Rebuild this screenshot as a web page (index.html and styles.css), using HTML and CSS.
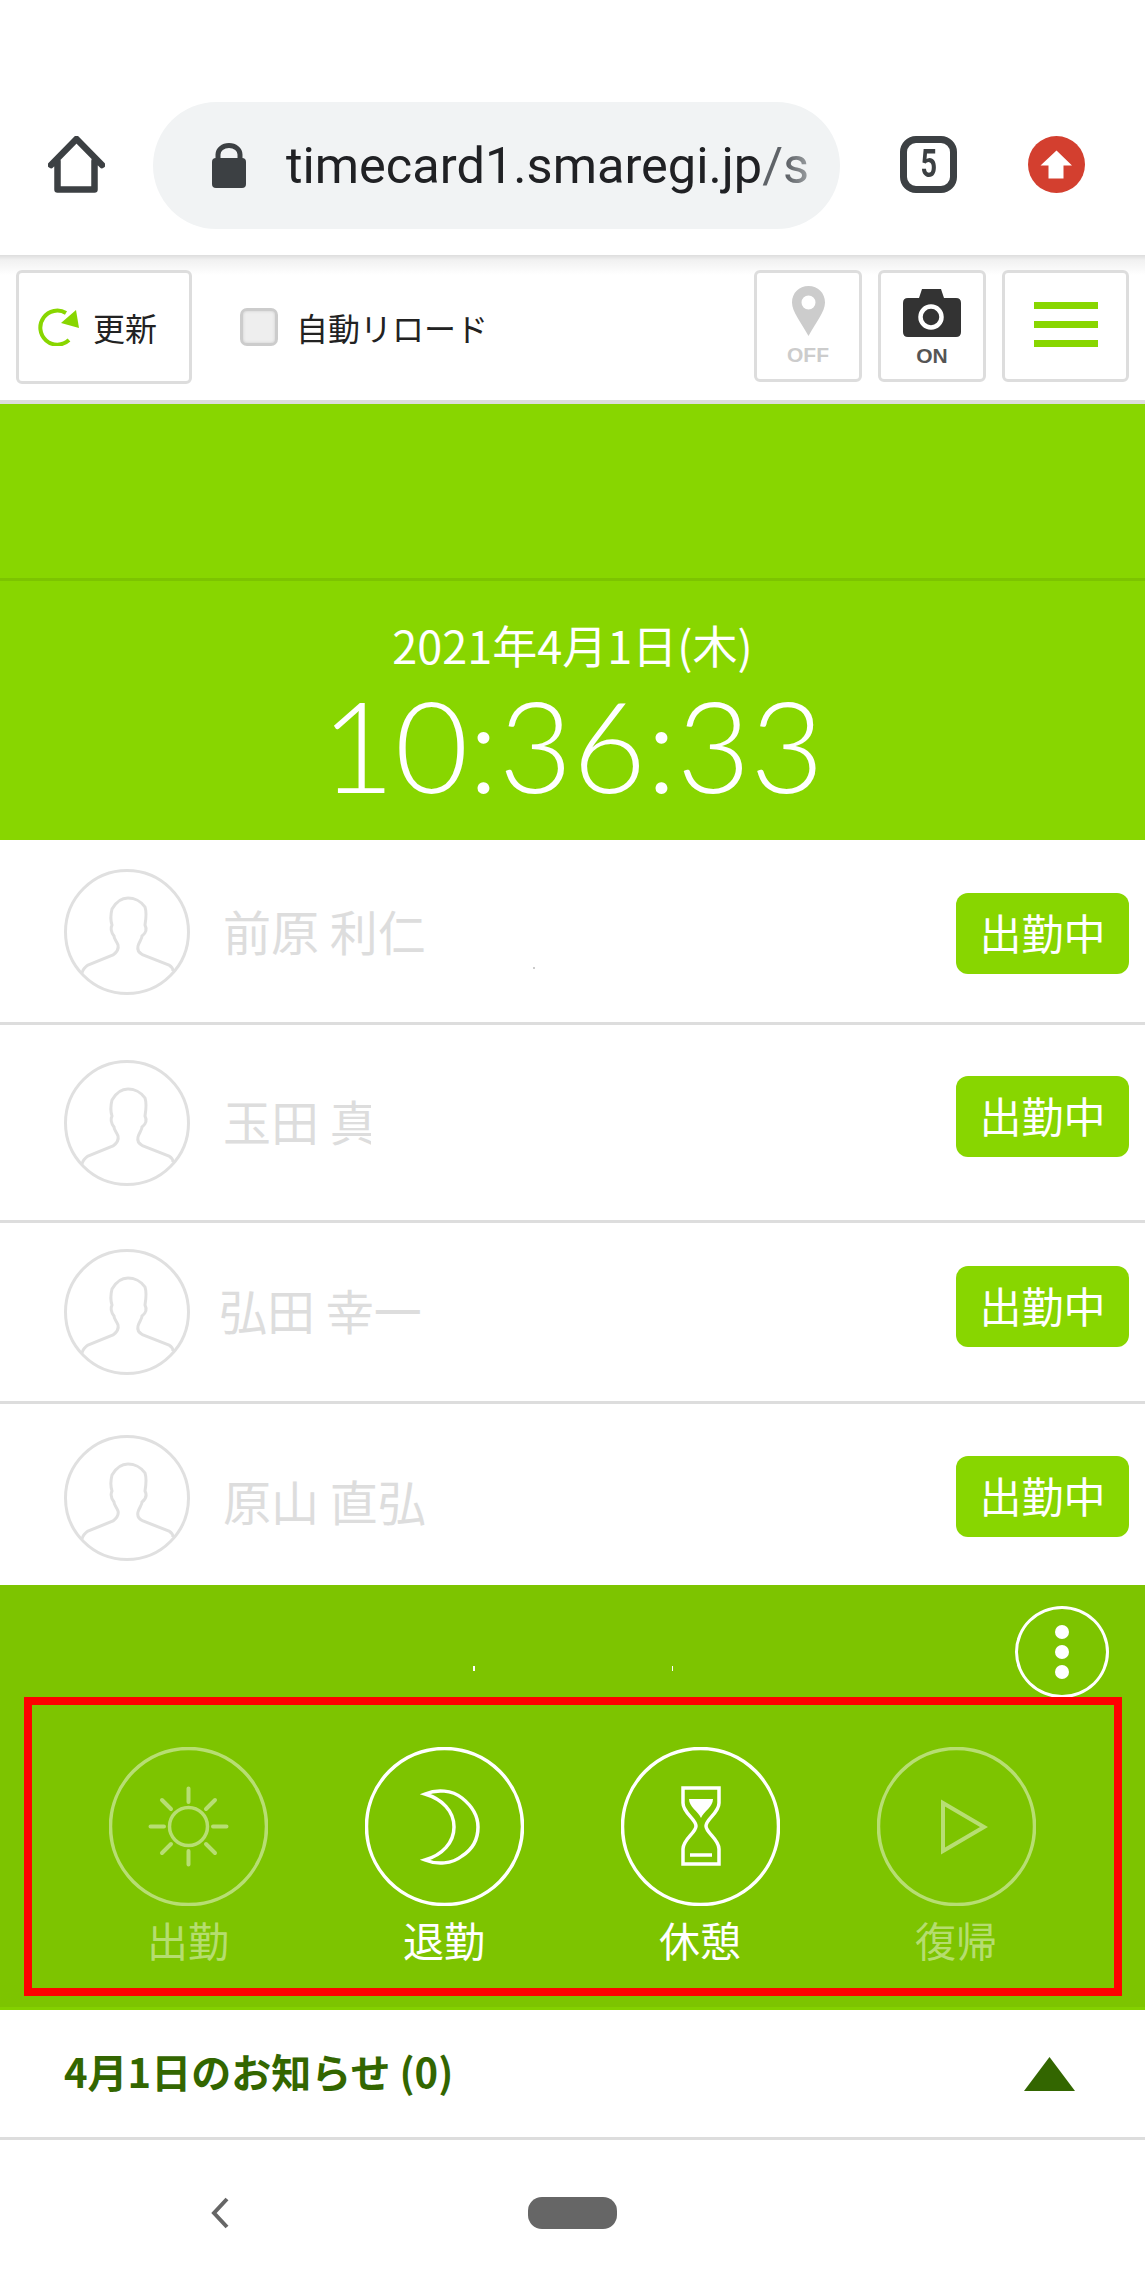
FILE: index.html
```html
<!DOCTYPE html>
<html lang="ja">
<head>
    <meta charset="UTF-8">
    <title>タイムカード</title>
    <link rel="stylesheet" href="styles.css">
</head>
<body>
    <div class="browser-bar">
        <svg class="home-icon" viewBox="0 0 57 57"><path d="M3 29 28.5 3 54 29M9.5 25V53.5H46.5V25" fill="none" stroke="#3c4043" stroke-width="6.5" stroke-linecap="round" stroke-linejoin="round"/></svg>
        <div class="url-pill">
            <svg class="lock-icon" viewBox="0 0 34 45"><rect y="15" width="34" height="30" rx="4" fill="#3c4043"/><path d="M6 17V11.5A11 9 0 0 1 28 11.5V17" fill="none" stroke="#3c4043" stroke-width="5"/></svg>
            <span class="url-text">timecard1.smaregi.jp<span class="url-path">/s</span></span>
        </div>
        <div class="tab-count"><span>5</span></div>
        <svg class="update-icon" viewBox="0 0 57 57"><circle cx="28.5" cy="28.5" r="28.5" fill="#d33f2f"/><path d="M28.5 14.5 44 29.5H35.5V42.5H20.5V29.5H12.5Z" fill="#fff"/></svg>
    </div>

    <div class="toolbar">
        <button class="tool-btn reload-btn">
            <svg class="reload-icon" viewBox="0 0 42 38"><path d="M28 5A17 17 0 1 0 31 32" fill="none" stroke="#88d600" stroke-width="4"/><path d="M38 2 41 20 23 15Z" fill="#88d600"/></svg>
            <span>更新</span>
        </button>
        <label class="auto-reload"><span class="check-box"></span>自動リロード</label>
        <button class="tool-btn status-btn gps-btn">
            <svg class="pin-icon" viewBox="0 0 33 50"><path fill-rule="evenodd" d="M16.5 0C26 0 33 7 33 16.5 33 26 24 36 16.5 50 9 36 0 26 0 16.5 0 7 7 0 16.5 0ZM16.5 9.500A7 7 0 1 0 16.500 23.500 7 7 0 1 0 16.500 9.500Z" fill="#ccc"/></svg>
            <span class="status-text">OFF</span>
        </button>
        <button class="tool-btn status-btn camera-btn">
            <svg class="camera-icon" viewBox="0 0 58 48"><path d="M19 0H38L41 9H53Q58 9 58 14V43Q58 48 53 48H5Q0 48 0 43V14Q0 9 5 9H16Z" fill="#333"/><circle cx="28" cy="28" r="10.500" fill="none" stroke="#fff" stroke-width="4.500"/></svg>
            <span class="status-text">ON</span>
        </button>
        <button class="tool-btn menu-btn"><i></i><i></i><i></i></button>
    </div>

    <div class="title-band"></div>
    <div class="clock-band">
        <div class="date">2021年4月1日(木)</div>
        <div class="clock">10:36:33</div>
    </div>

    <ul class="staff-list">
        <li class="staff row-a">
            <svg class="avatar" viewBox="0 0 126 126"><circle cx="63" cy="63" r="61.500"/><path d="M18 104C19 100 21 98 24 96L49 86C53 83 55 80 54 76 52 71 50 70 50 67 47 63 46 60 48 56 46 50 47 44 48 40 52 33 58 29 64 29 70 29 77 32 81 38 83 44 82 50 81 56 83 60 82 64 78 67 78 70 75 73 74 77 73 81 75 84 79 86L105 96C108 98 109 100 109 102"/></svg>
            <span class="staff-name">前原 利仁</span>
            <span class="badge">出勤中</span>
        </li>
        <li class="staff row-b">
            <svg class="avatar" viewBox="0 0 126 126"><circle cx="63" cy="63" r="61.500"/><path d="M18 104C19 100 21 98 24 96L49 86C53 83 55 80 54 76 52 71 50 70 50 67 47 63 46 60 48 56 46 50 47 44 48 40 52 33 58 29 64 29 70 29 77 32 81 38 83 44 82 50 81 56 83 60 82 64 78 67 78 70 75 73 74 77 73 81 75 84 79 86L105 96C108 98 109 100 109 102"/></svg>
            <span class="staff-name clip-name">玉田 真</span>
            <span class="badge">出勤中</span>
        </li>
        <li class="staff row-c">
            <svg class="avatar" viewBox="0 0 126 126"><circle cx="63" cy="63" r="61.500"/><path d="M18 104C19 100 21 98 24 96L49 86C53 83 55 80 54 76 52 71 50 70 50 67 47 63 46 60 48 56 46 50 47 44 48 40 52 33 58 29 64 29 70 29 77 32 81 38 83 44 82 50 81 56 83 60 82 64 78 67 78 70 75 73 74 77 73 81 75 84 79 86L105 96C108 98 109 100 109 102"/></svg>
            <span class="staff-name">弘田 幸一</span>
            <span class="badge">出勤中</span>
        </li>
        <li class="staff row-d">
            <svg class="avatar" viewBox="0 0 126 126"><circle cx="63" cy="63" r="61.500"/><path d="M18 104C19 100 21 98 24 96L49 86C53 83 55 80 54 76 52 71 50 70 50 67 47 63 46 60 48 56 46 50 47 44 48 40 52 33 58 29 64 29 70 29 77 32 81 38 83 44 82 50 81 56 83 60 82 64 78 67 78 70 75 73 74 77 73 81 75 84 79 86L105 96C108 98 109 100 109 102"/></svg>
            <span class="staff-name">原山 直弘</span>
            <span class="badge">出勤中</span>
        </li>
    </ul>
    <i class="speck speck-row"></i>

    <div class="punch-panel">
        <button class="more-btn"><i></i><i></i><i></i></button>
        <div class="punch-frame">
            <div class="punch-item off">
                <svg class="punch-icon" viewBox="0 0 159 159"><circle cx="79.500" cy="79.500" r="78"/><circle cx="79.500" cy="79.500" r="19"/><path stroke-width="4" stroke-linecap="round" d="M79.500 41.500V55M79.500 104V117.500M41.500 79.500H55M104 79.500H117.500M53 53 62 62M97 97 106 106M53 106 62 97M97 62 106 53"/></svg>
                <span class="punch-label">出勤</span>
            </div>
            <div class="punch-item">
                <svg class="punch-icon" viewBox="0 0 159 159"><circle cx="79.500" cy="79.500" r="78"/><path d="M60 47C72 42 87 43 97 51 107 59 113 69 113 80 113 91 108 102 97 109 87 117 72 118 60 113 77 108 89 96 89 80 89 64 77 52 60 47Z"/></svg>
                <span class="punch-label">退勤</span>
            </div>
            <div class="punch-item">
                <svg class="punch-icon" viewBox="0 0 159 159"><circle cx="79.500" cy="79.500" r="78"/><path d="M62 41H98V56C98 66 85 72 85 79 85 86 98 92 98 102V117H62V102C62 92 75 86 75 79 75 72 62 66 62 56Z"/><path class="fill" d="M68 52H92C92 60 83 64 80 71 77 64 68 60 68 52Z"/><path d="M69 108H91"/></svg>
                <span class="punch-label">休憩</span>
            </div>
            <div class="punch-item off">
                <svg class="punch-icon" viewBox="0 0 159 159"><circle cx="79.500" cy="79.500" r="78"/><path stroke-width="4" d="M66 56 107 80 66 104Z"/></svg>
                <span class="punch-label">復帰</span>
            </div>
        </div>
        <i class="speck speck-a"></i>
        <i class="speck speck-b"></i>
    </div>

    <div class="notice-bar">
        <span class="notice-title">4月1日のお知らせ (0)</span>
        <svg class="notice-arrow" viewBox="0 0 51 34"><path d="M25.500 0 51 34H0Z" fill="#336600"/></svg>
    </div>

    <div class="nav-bar">
        <svg class="nav-back" viewBox="0 0 19 32"><path d="M17 2 4 16 17 30" fill="none" stroke="#666" stroke-width="4"/></svg>
        <span class="nav-home"></span>
    </div>
</body>
</html>
```
FILE: styles.css
```css
* {
    box-sizing: border-box;
}
html, body {
    margin: 0;
    padding: 0;
}
body {
    position: relative;
    width: 1145px;
    height: 2290px;
    overflow: hidden;
    background-color: #fff;
    font-family: "Noto Sans CJK JP", sans-serif;
    color: #222;
}
button {
    font-family: inherit;
    background: #fff;
    padding: 0;
}
ul {
    list-style: none;
    margin: 0;
    padding: 0;
}

/* browser chrome */
.browser-bar {
    display: flex;
    align-items: center;
    height: 255px;
    padding: 102px 0 26px 48px;
}
.home-icon {
    width: 57px;
    height: 57px;
    margin-top: -3px;
}
.url-pill {
    display: flex;
    align-items: center;
    width: 687px;
    height: 127px;
    margin-left: 48px;
    padding-left: 59px;
    border-radius: 64px;
    background-color: #f1f3f4;
    overflow: hidden;
}
.lock-icon {
    width: 34px;
    height: 45px;
    flex: none;
}
.url-text {
    flex: none;
    width: 522px;
    margin-left: 40px;
    overflow: hidden;
    font-family: Roboto, sans-serif;
    font-size: 50.500px;
    color: #202124;
    white-space: nowrap;
    -webkit-mask-image: linear-gradient(to right, #000 96%, rgba(0, 0, 0, 0.6));
    mask-image: linear-gradient(to right, #000 96%, rgba(0, 0, 0, 0.6));
}
.url-path {
    color: #5f6368;
}
.tab-count {
    display: flex;
    align-items: center;
    justify-content: center;
    width: 57px;
    height: 57px;
    margin-left: 60px;
    margin-top: -3px;
    border: 7px solid #3c4043;
    border-radius: 16px;
    font-family: Roboto, sans-serif;
    font-size: 38px;
    font-weight: bold;
    color: #3c4043;
}
.tab-count span {
    transform: scaleX(0.76);
}
.update-icon {
    width: 57px;
    height: 57px;
    margin-left: 71px;
    margin-top: -3px;
}

/* toolbar */
.toolbar {
    display: flex;
    align-items: flex-start;
    height: 149px;
    padding: 15px 16px 0;
    border-bottom: 4px solid #ddd;
    background: linear-gradient(#ddd 0, #f1f1f1 5px, #fff 20px);
}
.tool-btn {
    height: 112px;
    border: 3px solid #ddd;
    border-radius: 6px;
}
.reload-btn {
    display: flex;
    align-items: center;
    width: 176px;
    height: 114px;
    padding: 0 0 0 19px;
    font-size: 32px;
    color: #222;
}
.reload-icon {
    width: 42px;
    height: 38px;
    margin-right: 13px;
}
.auto-reload {
    display: flex;
    align-items: center;
    height: 114px;
    margin-left: 48px;
    font-size: 32px;
}
.check-box {
    width: 38px;
    height: 38px;
    margin-right: 18px;
    border: 3px solid #ccc;
    border-radius: 7px;
    background-color: #eee;
    box-shadow: inset 0 0 3px #ccc;
}
.status-btn {
    display: flex;
    flex-direction: column;
    align-items: center;
    width: 108px;
}
.gps-btn {
    margin-left: auto;
    padding-top: 13px;
    color: #ccc;
}
.camera-btn {
    margin-left: 16px;
    padding-top: 16px;
    color: #555;
}
.pin-icon {
    width: 33px;
    height: 50px;
}
.camera-icon {
    width: 58px;
    height: 48px;
}
.status-text {
    margin-top: 7px;
    font-family: "Liberation Sans", sans-serif;
    font-size: 21px;
    font-weight: bold;
    line-height: 24px;
}
.menu-btn {
    display: flex;
    flex-direction: column;
    align-items: center;
    gap: 12px;
    width: 127px;
    margin-left: 16px;
    padding-top: 29px;
}
.menu-btn i {
    display: block;
    width: 64px;
    height: 7px;
    background-color: #88d600;
}

/* clock */
.title-band {
    height: 177px;
    background-color: #88d600;
    border-bottom: 3px solid #7cc400;
}
.clock-band {
    height: 259px;
    padding-top: 39px;
    background-color: #88d600;
    color: #fff;
    text-align: center;
}
.date {
    font-size: 45px;
    line-height: 50px;
}
.clock {
    margin-top: 9px;
    font-family: Lato, sans-serif;
    font-size: 127px;
    font-weight: 300;
    line-height: 130px;
}

/* staff rows */
.staff {
    display: flex;
    align-items: flex-start;
    padding: 0 16px 0 64px;
    border-bottom: 3px solid #ddd;
}
.row-a {
    height: 185px;
    --avatar-top: 29px;
    --name-top: 60px;
    --badge-top: 53px;
}
.row-b {
    height: 198px;
    --avatar-top: 35px;
    --name-top: 65px;
    --badge-top: 51px;
}
.row-c {
    height: 181px;
    --avatar-top: 26px;
    --name-top: 56px;
    --badge-top: 43px;
}
.row-d {
    height: 181px;
    border-bottom: none;
    --avatar-top: 31px;
    --name-top: 66px;
    --badge-top: 52px;
}
.avatar {
    flex: none;
    width: 126px;
    height: 126px;
    margin-top: var(--avatar-top);
    fill: none;
    stroke: #e0e0e0;
    stroke-width: 3;
}
.staff-name {
    margin-top: var(--name-top);
    margin-left: 33px;
    font-size: 48px;
    line-height: 60px;
    color: #ddd;
    white-space: nowrap;
}
.row-c .staff-name {
    margin-left: 29px;
}
.clip-name {
    width: 148px;
    overflow: hidden;
}
.badge {
    width: 173px;
    height: 81px;
    margin-top: var(--badge-top);
    margin-left: auto;
    border-radius: 12px;
    background-color: #88d600;
    color: #fff;
    font-size: 42px;
    line-height: 77px;
    text-align: center;
}

/* punch buttons */
.punch-panel {
    position: relative;
    height: 425px;
    padding-top: 21px;
    background-color: #7dc400;
    border-bottom: 3px solid #84d000;
}
.more-btn {
    display: flex;
    flex-direction: column;
    align-items: center;
    gap: 6px;
    width: 94px;
    height: 92px;
    margin-left: 1015px;
    padding-top: 16px;
    border: 3px solid #fff;
    border-radius: 50%;
    background: none;
}
.more-btn i {
    display: block;
    width: 14px;
    height: 14px;
    border-radius: 50%;
    background-color: #fff;
}
.punch-frame {
    display: grid;
    grid-template-columns: repeat(4, 256px);
    justify-content: center;
    width: 1098px;
    height: 299px;
    margin-top: -1px;
    margin-left: 24px;
    padding: 42px 2px 0 0;
    border: 8px solid #f00;
}
.punch-item {
    display: flex;
    flex-direction: column;
    align-items: center;
    color: #fff;
}
.punch-item.off {
    color: rgba(255, 255, 255, 0.45);
}
.punch-icon {
    width: 159px;
    height: 159px;
    fill: none;
    stroke: currentColor;
    stroke-width: 3.500;
}
.punch-icon .fill {
    fill: currentColor;
    stroke: none;
}
.punch-label {
    margin-top: 8px;
    font-size: 41px;
    line-height: 50px;
}
.speck {
    position: absolute;
    top: 81px;
    width: 2px;
    height: 5px;
    background-color: #fff;
}
.speck-a {
    left: 473px;
}
.speck-b {
    left: 672px;
    width: 1px;
}
.speck-row {
    top: 967px;
    left: 533px;
    height: 2px;
    background-color: #ccc;
}

/* notices */
.notice-bar {
    display: flex;
    align-items: center;
    justify-content: space-between;
    height: 130px;
    padding: 0 70px 0 64px;
    border-bottom: 3px solid #ddd;
}
.notice-title {
    margin-top: -6px;
    font-size: 40px;
    font-weight: bold;
    color: #336600;
}
.notice-arrow {
    width: 51px;
    height: 34px;
}

/* android nav */
.nav-bar {
    display: flex;
    align-items: center;
    height: 150px;
    padding: 0 0 4px 210px;
}
.nav-back {
    width: 19px;
    height: 32px;
}
.nav-home {
    width: 89px;
    height: 32px;
    margin-left: 299px;
    border-radius: 14px;
    background-color: #666;
}
```
